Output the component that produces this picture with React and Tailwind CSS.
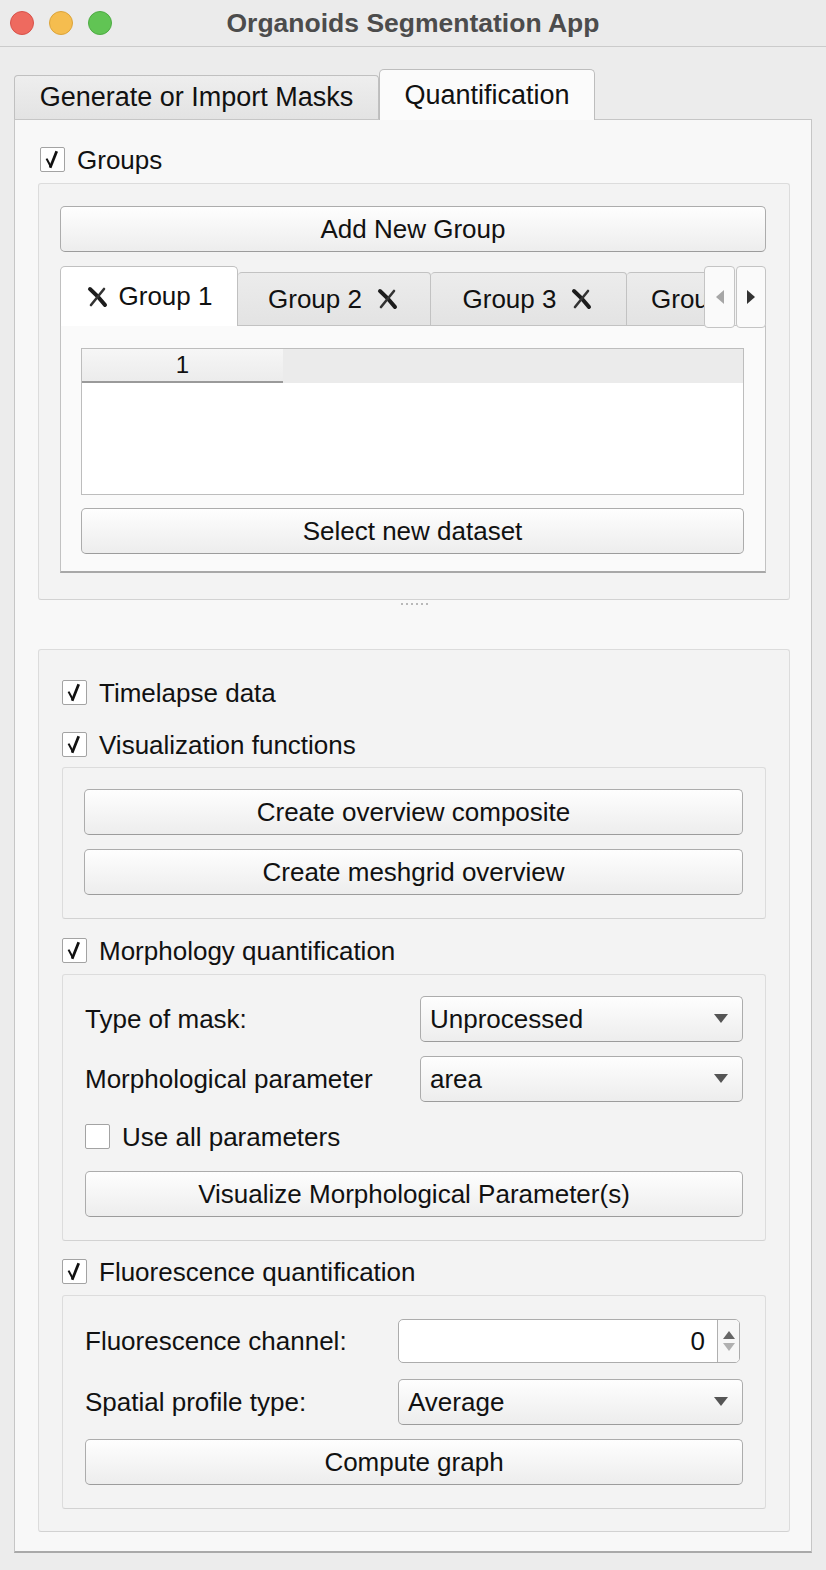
import React from 'react';

function Check({ checked = true }) {
    return (
        <span className="w-[25px] h-[25px] shrink-0 border border-[#a3a3a3] bg-white rounded-[2px] flex items-center justify-center">
            {checked && (
                <svg viewBox="0 0 25 25" className="w-[25px] h-[25px]">
                    <path d="M6.5 12.5 L10.5 20" fill="none" stroke="#111" strokeWidth="2.2" strokeLinecap="square" />
                    <path d="M10.5 20 L16.5 5" fill="none" stroke="#111" strokeWidth="3" strokeLinecap="square" />
                </svg>
            )}
        </span>
    );
}

function CheckRow({ label, checked = true, className = '' }) {
    return (
        <div className={`flex items-center h-[25px] ${className}`}>
            <Check checked={checked} />
            <span className="ml-[12px] text-[26px] leading-none text-[#111]">{label}</span>
        </div>
    );
}

function Button({ children, className = '' }) {
    return (
        <div
            className={`h-[46px] flex items-center justify-center rounded-[5px] border border-[#acacac] border-b-[#9c9c9c] bg-gradient-to-b from-[#fefefe] to-[#ededed] text-[26px] text-[#111] ${className}`}
        >
            {children}
        </div>
    );
}

function Combo({ value, className = '' }) {
    return (
        <div
            className={`h-[46px] flex items-center justify-between rounded-[5px] border border-[#acacac] border-b-[#9c9c9c] bg-gradient-to-b from-[#fefefe] to-[#ededed] pl-[9px] pr-[14px] text-[26px] text-[#111] ${className}`}
        >
            <span>{value}</span>
            <svg viewBox="0 0 14 10" className="w-[14px] h-[10px]">
                <path d="M0 0 L14 0 L7 9 Z" fill="#555" />
            </svg>
        </div>
    );
}

function GroupBox({ children, className = '' }) {
    return (
        <div className={`border border-[#dcdcdc] border-b-[#d2d2d2] bg-[#f3f3f3] rounded-[3px] ${className}`}>
            {children}
        </div>
    );
}

function CloseX() {
    return (
        <svg viewBox="0 0 24 22" className="w-[24px] h-[22px]">
            <path d="M4 3 Q12 10 19 19" fill="none" stroke="#1c1c1c" strokeWidth="4" strokeLinecap="round" />
            <path d="M18 3 L5 19" fill="none" stroke="#333" strokeWidth="2.6" strokeLinecap="round" />
        </svg>
    );
}

function GroupTab({ name, active, width, xLeft }) {
    if (active) {
        return (
            <div
                style={{ width }}
                className="h-[60px] shrink-0 flex items-center justify-center gap-[9px] bg-white border border-[#c0c0c0] border-b-0 rounded-t-[5px] text-[26px] text-[#111] relative z-10"
            >
                <CloseX />
                <span>{name}</span>
            </div>
        );
    }
    return (
        <div
            style={{ width }}
            className={`h-[54px] shrink-0 flex items-center ${xLeft ? 'pl-[24px]' : 'justify-center'} gap-[14px] bg-gradient-to-b from-[#ececec] to-[#e3e3e3] border border-[#c2c2c2] border-l-0 rounded-t-[4px] text-[26px] text-[#111]`}
        >
            <span className="whitespace-nowrap">{name}</span>
            <CloseX />
        </div>
    );
}

export default function App() {
    return (
        <div className="w-[826px] h-[1570px] bg-[#ececec] font-['Liberation_Sans',Arial,sans-serif] overflow-hidden">
            {/* title bar */}
            <div className="h-[47px] grid grid-cols-[1fr_auto_1fr] items-center border-b border-[#cbcbcb] bg-[#ebebeb]">
                <div className="flex items-center gap-[15px] pl-[10px]">
                    <span className="w-[24px] h-[24px] rounded-full bg-[#ee6a5f] border border-[#d8524a]" />
                    <span className="w-[24px] h-[24px] rounded-full bg-[#f5bd4f] border border-[#dca43a]" />
                    <span className="w-[24px] h-[24px] rounded-full bg-[#61c454] border border-[#4eab43]" />
                </div>
                <div className="text-[26.5px] font-bold text-[#4c4c4c] pt-[1px]">Organoids Segmentation App</div>
                <div />
            </div>

            {/* main tab widget */}
            <div className="mx-[14px] mt-[21px]">
                <div className="flex items-end h-[51px]">
                    <div className="w-[365px] h-[44px] flex items-center justify-center bg-gradient-to-b from-[#eeeeee] to-[#e3e3e3] border border-[#c0c0c0] border-b-0 rounded-t-[4px] text-[27px] text-[#111]">
                        Generate or Import Masks
                    </div>
                    <div className="w-[216px] h-[51px] -mb-px flex items-center justify-center bg-[#fbfbfb] border border-[#bdbdbd] border-b-0 rounded-t-[5px] text-[27px] text-[#111] relative z-10">
                        Quantification
                    </div>
                </div>
                <div className="h-[1434px] bg-[#f8f8f8] border border-[#c6c6c6] border-b-2 border-b-[#a9a9a9] pt-[27px] pl-[23px] pr-[21px]">
                    <CheckRow label="Groups" className="ml-[2px]" />

                    <GroupBox className="mt-[11px] h-[417px] pt-[22px] pl-[21px] pr-[23px]">
                        <Button>Add New Group</Button>

                        {/* inner tab widget */}
                        <div className="mt-[14px]">
                            <div className="flex items-start h-[59px]">
                                <div className="w-[644px] flex items-end h-[60px] overflow-hidden">
                                    <GroupTab name="Group 1" active width={178} />
                                    <GroupTab name="Group 2" width={193} />
                                    <GroupTab name="Group 3" width={196} />
                                    <GroupTab name="Group 4" width={196} xLeft />
                                </div>
                                <div className="flex gap-[1px] relative z-20">
                                    <div className="w-[31px] h-[62px] bg-[#fafafa] border border-[#c4c4c4] rounded-[4px] flex items-center justify-center">
                                        <svg viewBox="0 0 10 14" className="w-[10px] h-[14px]">
                                            <path d="M9 0 L9 14 L1 7 Z" fill="#a6a6a6" />
                                        </svg>
                                    </div>
                                    <div className="w-[30px] h-[62px] bg-[#fafafa] border border-[#c4c4c4] rounded-[4px] flex items-center justify-center">
                                        <svg viewBox="0 0 10 14" className="w-[10px] h-[14px]">
                                            <path d="M1 0 L1 14 L9 7 Z" fill="#333" />
                                        </svg>
                                    </div>
                                </div>
                            </div>
                            <div className="h-[248px] bg-[#fafafa] border border-[#c2c2c2] border-b-2 border-b-[#a8a8a8] pt-[22px] pl-[20px] pr-[21px]">
                                <div className="h-[147px] bg-white border border-[#bdbdbd]">
                                    <div className="h-[34px] bg-[#ebebeb] flex">
                                        <div className="w-[201px] h-[34px] bg-gradient-to-b from-[#f6f6f6] to-[#ececec] border-b-2 border-[#9a9a9a] flex items-center justify-center text-[24px] text-[#111]">
                                            1
                                        </div>
                                    </div>
                                </div>
                                <Button className="mt-[13px]">Select new dataset</Button>
                            </div>
                        </div>
                    </GroupBox>

                    {/* splitter handle */}
                    <div className="h-[49px] flex justify-center pt-[3px]">
                        <div className="flex gap-[3px] h-[2px]">
                            {[0, 1, 2, 3, 4, 5].map((i) => (
                                <span key={i} className="w-[2px] h-[2px] bg-[#b8b8b8]" />
                            ))}
                        </div>
                    </div>

                    <GroupBox className="h-[883px] pt-[30px] pl-[23px] pr-[23px]">
                        <CheckRow label="Timelapse data" />
                        <CheckRow label="Visualization functions" className="mt-[27px]" />

                        <GroupBox className="mt-[10px] pt-[21px] pb-[23px] pl-[21px] pr-[22px]">
                            <Button>Create overview composite</Button>
                            <Button className="mt-[14px]">Create meshgrid overview</Button>
                        </GroupBox>

                        <CheckRow label="Morphology quantification" className="mt-[19px]" />

                        <GroupBox className="mt-[11px] pt-[21px] pb-[23px] pl-[22px] pr-[22px]">
                            <div className="flex items-center justify-between">
                                <span className="text-[26px] text-[#111]">Type of mask:</span>
                                <Combo value="Unprocessed" className="w-[323px]" />
                            </div>
                            <div className="flex items-center justify-between mt-[14px]">
                                <span className="text-[26px] text-[#111]">Morphological parameter</span>
                                <Combo value="area" className="w-[323px]" />
                            </div>
                            <CheckRow label="Use all parameters" checked={false} className="mt-[22px]" />
                            <Button className="mt-[22px]">Visualize Morphological Parameter(s)</Button>
                        </GroupBox>

                        <CheckRow label="Fluorescence quantification" className="mt-[18px]" />

                        <GroupBox className="mt-[11px] pt-[23px] pb-[23px] pl-[22px] pr-[22px]">
                            <div className="flex items-center justify-between">
                                <span className="text-[26px] text-[#111]">Fluorescence channel:</span>
                                <div className="w-[342px] h-[44px] mr-[3px] flex bg-white border border-[#acacac] rounded-[5px] overflow-hidden">
                                    <div className="flex-1 flex items-center justify-end pr-[12px] text-[26px] text-[#111]">0</div>
                                    <div className="w-[22px] border-l border-[#b0b0b0] bg-[#f7f7f7] flex flex-col items-center justify-center gap-[4px]">
                                        <svg viewBox="0 0 12 8" className="w-[12px] h-[8px]">
                                            <path d="M0 8 L12 8 L6 0 Z" fill="#666" />
                                        </svg>
                                        <svg viewBox="0 0 12 8" className="w-[12px] h-[8px]">
                                            <path d="M0 0 L12 0 L6 8 Z" fill="#b0b0b0" />
                                        </svg>
                                    </div>
                                </div>
                            </div>
                            <div className="flex items-center justify-between mt-[16px]">
                                <span className="text-[26px] text-[#111]">Spatial profile type:</span>
                                <Combo value="Average" className="w-[345px]" />
                            </div>
                            <Button className="mt-[14px]">Compute graph</Button>
                        </GroupBox>
                    </GroupBox>
                </div>
            </div>
        </div>
    );
}
